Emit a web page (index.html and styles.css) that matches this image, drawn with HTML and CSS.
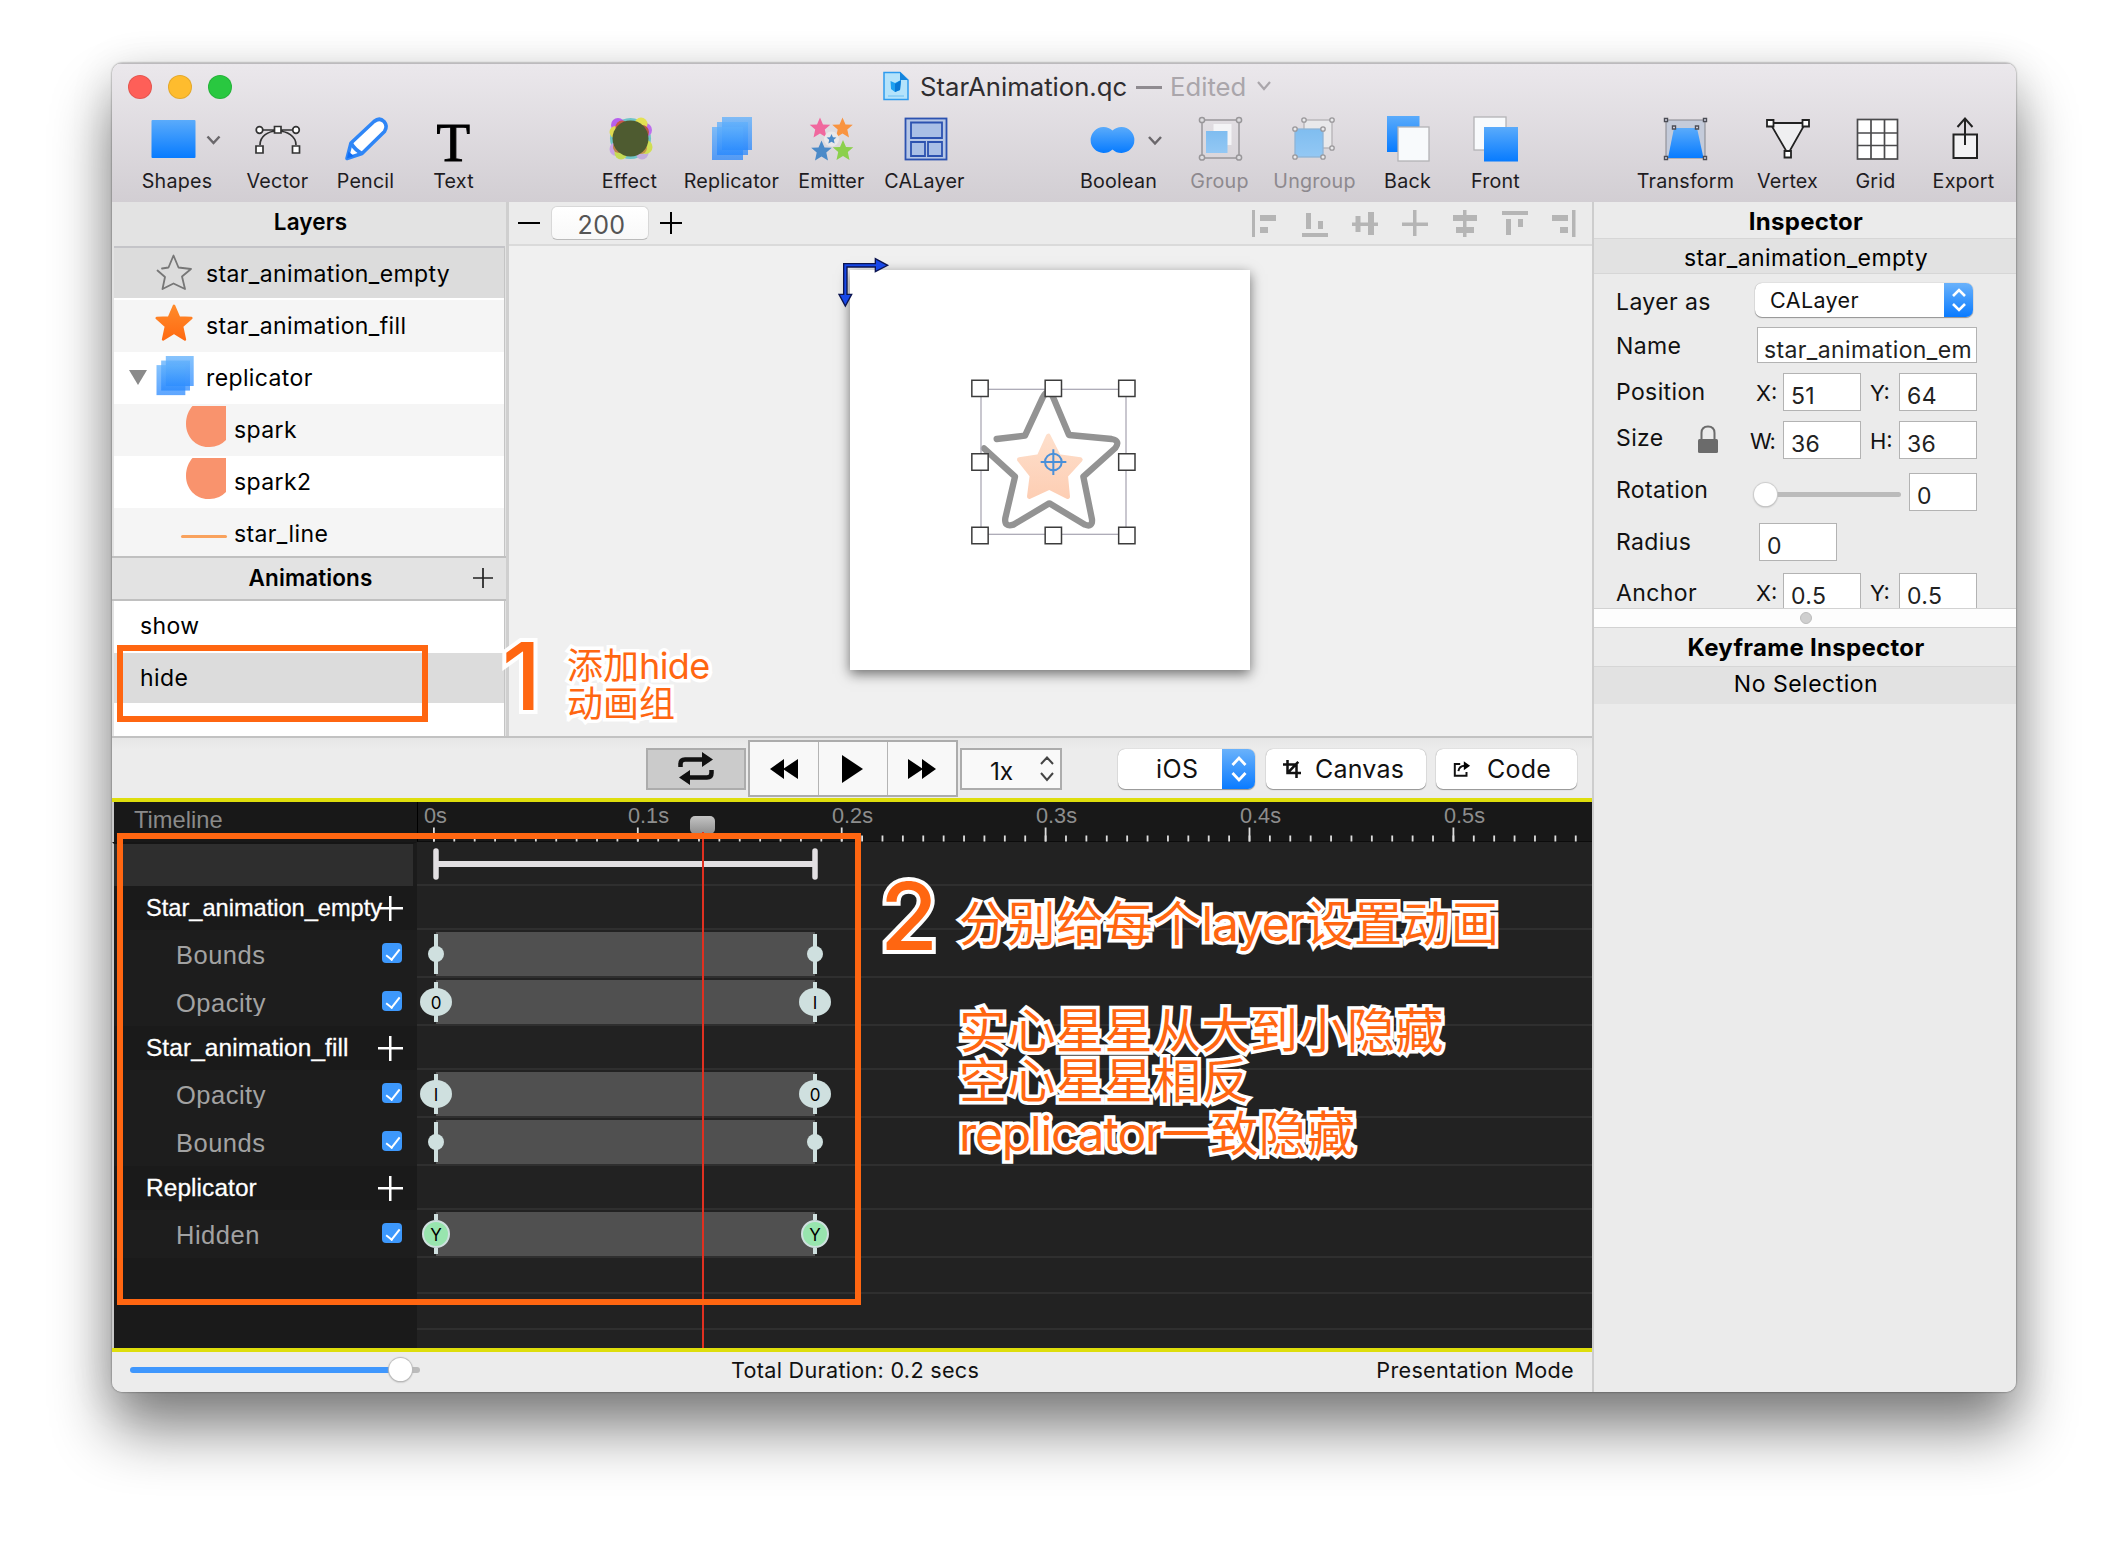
FILE: index.html
```html
<!DOCTYPE html>
<html lang="en">
<head>
<meta charset="utf-8">
<title>StarAnimation.qc</title>
<link rel="stylesheet" href="styles.css">
</head>
<body>
<svg class="defs" width="0" height="0">
  <defs>
    <linearGradient id="blue" x1="0" y1="0" x2="0" y2="1"><stop offset="0" stop-color="#5aabfb"/><stop offset="1" stop-color="#077bff"/></linearGradient>
    <linearGradient id="paleblue" x1="0" y1="0" x2="0" y2="1"><stop offset="0" stop-color="#7fbdf0"/><stop offset="1" stop-color="#93c8f4"/></linearGradient>
    <linearGradient id="orange" x1="0" y1="0" x2="0" y2="1"><stop offset="0" stop-color="#ff8a2a"/><stop offset="1" stop-color="#ff6a12"/></linearGradient>
    <linearGradient id="peach" x1="0" y1="0" x2="0" y2="1"><stop offset="0" stop-color="#fedfcb"/><stop offset="1" stop-color="#fdceb4"/></linearGradient>
    <linearGradient id="layer" x1="0" y1="0" x2="0" y2="1"><stop offset="0" stop-color="#5fb0fc" stop-opacity=".75"/><stop offset="1" stop-color="#1a80ff" stop-opacity=".7"/></linearGradient>
    <path id="star" d="M0-10.5 3-3.6 10.3-3.2 4.8 1.6 6.5 9.5 0 5.5-6.5 9.5-4.8 1.6-10.3-3.2-3-3.6Z" stroke-linejoin="round" stroke-width="1.5"/>
    <g id="stack" fill="url(#layer)">
      <path d="M10 0H40V33H10Z"/>
      <path d="M5 5H36V38H5Z"/>
      <path d="M0 10H31V43H0Z"/>
    </g>
  </defs>
</svg>
<div class="window">
  <header class="titlebar">
    <div class="title-row">
      <div class="lights"><i class="red"></i><i class="amber"></i><i class="green"></i></div>
      <div class="title">
        <svg width="26" height="30" viewBox="883 71 26 30"><path d="M884 72.500H900L908 80V99.500H884Z" fill="#b4e3fb" stroke="#2d9bee" stroke-width="1.500"/><path d="M900 72V80H908Z" fill="#1584dc"/><path d="M890.500 81 895 83 901 80 900 90 895 92 891 89Z" fill="#1ea0f0"/><path d="M895 84 901 80 900 90 895 92Z" fill="#0a78d4"/><path d="M888 96H904" stroke="#6fc0f2"/></svg>
        <span class="name">StarAnimation.qc</span><span class="dash"></span><span class="edited">Edited</span>
        <svg width="16" height="12" viewBox="0 0 16 12"><path d="M2 2 8 9 14 2" fill="none" stroke="#aaa6ab" stroke-width="2.200"/></svg>
      </div>
    </div>
    <div class="tools">
      <div class="tool"><svg viewBox="126.500 114 100 52"><rect x="151" y="120" width="44" height="38" rx="1" fill="url(#blue)"/><path d="M207 136.500 213 143 219 136.500" fill="none" stroke="#6b686c" stroke-width="2.500"/></svg><span>Shapes</span></div>
      <div class="tool"><svg viewBox="227 114 100 52"><g stroke="#333" stroke-width="1.700" fill="none"><path d="M263 130H293M260 145C260 136 268 131 277.500 131S296 136 296 145"/><g fill="#fff"><circle cx="259.500" cy="130" r="3.300"/><circle cx="296" cy="130" r="3.300"/><path d="M274.500 126.500h6.500v6.500h-6.500ZM256 146h7v7h-7ZM292.500 146h7v7h-7Z"/></g></g></svg><span>Vector</span></div>
      <div class="tool"><svg viewBox="315 114 100 52"><g fill="#fff" stroke="#2f86f6" stroke-width="3.600" stroke-linejoin="round"><path d="M347 158.500 351 143 374 121.500Q379.500 117 384 121.500 388 126 384.500 131.500L362 153.500Z"/><path d="M351 143Q355 150 362 153.500" fill="none"/></g><path d="M347 158.500 348.500 151.500 354 156Z" fill="#0f6df5"/></svg><span>Pencil</span></div>
      <div class="tool"><svg viewBox="403 114 100 52"><text class="glyph-t" x="453.500" y="160.500" text-anchor="middle">T</text></svg><span>Text</span></div>
      <div class="tool"><svg viewBox="579 114 100 52"><g opacity=".85"><circle cx="630.500" cy="138.500" r="20.500" fill="#5cc0c4"/><circle cx="618" cy="125" r="7" fill="#b04af0"/><circle cx="645" cy="130" r="7" fill="#b85af0"/><circle cx="641" cy="124" r="6.500" fill="#e4e23a"/><circle cx="615.500" cy="132" r="6" fill="#e0dc38"/><circle cx="616.500" cy="149" r="7" fill="#c79be6"/><circle cx="642" cy="153" r="6.500" fill="#bfa6dc"/><circle cx="621" cy="153" r="6.500" fill="#c2dc3e"/><circle cx="645.500" cy="147" r="7" fill="#cfe03c"/><circle cx="622" cy="127" r="6.500" fill="#c4432a"/><circle cx="642" cy="132" r="7" fill="#b0402c"/><circle cx="619" cy="147" r="6" fill="#b8742c"/><circle cx="641" cy="148" r="6" fill="#c08a30"/></g><circle cx="630.500" cy="138.500" r="18" fill="#4e5b30"/></svg><span>Effect</span></div>
      <div class="tool"><svg viewBox="681 114 100 52"><use href="#stack" x="712" y="117"/></svg><span>Replicator</span></div>
      <div class="tool"><svg viewBox="781 114 100 52"><use href="#star" x="820" y="128" fill="#f0689e"/><use href="#star" x="842.500" y="128" fill="#f99440"/><use href="#star" x="821.500" y="151" fill="#4b8ac8"/><use href="#star" x="843" y="150.500" fill="#8cd04c"/><circle cx="831.500" cy="139" r="7.500" fill="#e9e8ea"/><use href="#star" transform="translate(831.500 139) scale(.48)" fill="#4b8ac8"/></svg><span>Emitter</span></div>
      <div class="tool"><svg viewBox="874 114 100 52"><g fill="#a9bfe6" stroke="#2c52b0" stroke-width="1.800"><rect x="905.500" y="118.500" width="41" height="41" fill="#b6c7e6"/><path d="M911 122.500H942V138H911ZM911 142H925V156H911ZM928 142H942V156H928Z"/></g></svg><span>CALayer</span></div>
      <div class="tool"><svg viewBox="1068 114 100 52"><path d="M1112.500 130.500A13 13 0 1 0 1112.500 149.500 13 13 0 1 0 1112.500 130.500Z" fill="url(#blue)"/><path d="M1149 137 1155 143.500 1161 137" fill="none" stroke="#6b686c" stroke-width="2.500"/></svg><span>Boolean</span></div>
      <div class="tool off"><svg viewBox="1169 114 100 52"><rect x="1213.500" y="124" width="18" height="21" fill="#f4f4f6"/><rect x="1206" y="131" width="21.500" height="22" fill="url(#paleblue)"/><g fill="#dddcdf" stroke="#99979a" stroke-width="1.500"><rect x="1202" y="120" width="37" height="38" fill="none"/><circle cx="1202" cy="120" r="2.600"/><circle cx="1239" cy="120" r="2.600"/><circle cx="1202" cy="157.500" r="2.600"/><circle cx="1239" cy="157.500" r="2.600"/></g></svg><span>Group</span></div>
      <div class="tool off"><svg viewBox="1264 114 100 52"><g fill="#e9e9eb" stroke="#99979a" stroke-width="1.300"><rect x="1304" y="120" width="28" height="28" stroke="#b5b3b6"/><circle cx="1304" cy="120" r="2.200"/><circle cx="1332" cy="120" r="2.200"/><circle cx="1332" cy="148" r="2.200"/><rect x="1295" y="129" width="28" height="28" fill="url(#paleblue)" stroke="#8fb4d6"/><circle cx="1295" cy="129" r="2.200"/><circle cx="1323" cy="129" r="2.200"/><circle cx="1295" cy="157" r="2.200"/><circle cx="1323" cy="157" r="2.200"/></g></svg><span>Ungroup</span></div>
      <div class="tool"><svg viewBox="1357 114 100 52"><rect x="1387" y="116" width="32.500" height="36" fill="url(#blue)"/><rect x="1398" y="127" width="31" height="34" fill="#f8fafc" stroke="#b3b3b6" stroke-width="1.300"/></svg><span>Back</span></div>
      <div class="tool"><svg viewBox="1445 114 100 52"><rect x="1474" y="117" width="32" height="33" fill="#f8fafc" stroke="#b3b3b6" stroke-width="1.300"/><rect x="1484" y="127" width="34" height="34.500" fill="url(#blue)"/></svg><span>Front</span></div>
      <div class="tool"><svg viewBox="1635 114 100 52"><rect x="1666" y="120" width="39" height="38" fill="#c4cbda" stroke="#85868c"/><path d="M1674 128H1697L1703.500 158H1668Z" fill="url(#blue)"/><g fill="#eef" stroke="#4b4d55" stroke-width="1.400"><path d="M1664.500 118.500h3v3h-3ZM1703.500 118.500h3v3h-3ZM1664.500 156.500h3v3h-3ZM1703.500 156.500h3v3h-3ZM1672.500 126h3v3h-3ZM1695.500 126h3v3h-3Z"/></g></svg><span>Transform</span></div>
      <div class="tool"><svg viewBox="1737 114 100 52"><g stroke="#222" stroke-width="1.800" fill="#efeff1"><path d="M1770 123H1805.500L1788 154Z"/><g fill="#fff"><path d="M1767 120h6.500v6.500h-6.500ZM1802.500 120h6.500v6.500h-6.500ZM1784.500 151h6.500v6.500h-6.500Z"/></g></g></svg><span>Vertex</span></div>
      <div class="tool"><svg viewBox="1825 114 100 52"><g fill="#fff" stroke="#4a4a4c" stroke-width="1.700"><rect x="1857.500" y="119.500" width="40" height="39.500"/><path d="M1871 119V159M1884.500 119V159M1857 133H1898M1857 145.500H1898"/></g></svg><span>Grid</span></div>
      <div class="tool"><svg viewBox="1913 114 100 52"><g stroke="#222" stroke-width="2" fill="none"><rect x="1953.500" y="134.500" width="23.500" height="23.500" fill="#f3f2f4"/><path d="M1965 145V119M1957.500 127 1965 118.500 1972.500 127"/></g></svg><span>Export</span></div>
    </div>
  </header>

  <div class="body">
    <div class="main">
      <div class="upper">
        <aside class="side">
          <h2 class="layers-head">Layers</h2>
          <ul class="layers">
            <li class="picked"><svg class="ic" viewBox="154 252 42 42"><path d="M162 268.500 168.500 267.500 173.500 255.500 178.500 267.500 191 269 182 276.500 185 289 173.500 283.500 162.500 289 165 277 157.500 270.500" fill="none" stroke="#777" stroke-width="1.800" stroke-linejoin="round" stroke-linecap="round"/></svg><span>star_animation_empty</span></li>
            <li><svg class="ic" viewBox="154 303 42 42"><use href="#star" transform="translate(174 322.500) scale(1.680)" fill="url(#orange)" stroke="url(#orange)"/></svg><span>star_animation_fill</span></li>
            <li><svg class="tri" viewBox="0 0 18 15"><path d="M0 0H18L9 15Z" fill="#8a8a8a"/></svg><svg class="ic" viewBox="154 357 42 42"><use href="#stack" transform="translate(156.500 357) scale(.93 .91)"/></svg><span>replicator</span></li>
            <li class="child"><svg class="ic" viewBox="180 404 48 52"><path d="M192.500 406H226V440A23 23.500 0 0 1 208 447C196 447 186 437 186 424 186 416 189 410 192.500 406Z" fill="#f9936d"/></svg><span>spark</span></li>
            <li class="child"><svg class="ic" viewBox="180 404 48 52"><path d="M192.500 406H226V440A23 23.500 0 0 1 208 447C196 447 186 437 186 424 186 416 189 410 192.500 406Z" fill="#f9936d"/></svg><span>spark2</span></li>
            <li class="child"><svg class="ic" viewBox="180 508 48 52"><path d="M182.500 536.500H225.500" stroke="#f9a25d" stroke-width="3" stroke-linecap="round"/></svg><span>star_line</span></li>
          </ul>
          <h2 class="anim-head">Animations<svg width="22" height="22" viewBox="0 0 22 22"><path d="M1 11H21M11 1V21" stroke="#222" stroke-width="1.700"/></svg></h2>
          <ul class="anims"><li>show</li><li class="picked">hide</li></ul>
        </aside>
        <section class="stage">
          <div class="stage-bar">
            <svg width="24" height="24" viewBox="0 0 24 24"><path d="M1 12H23" stroke="#000" stroke-width="2"/></svg>
            <span class="zoom">200</span>
            <svg width="24" height="24" viewBox="0 0 24 24"><path d="M1 12H23M12 1V23" stroke="#000" stroke-width="2"/></svg>
            <svg class="aligns" width="346" height="34" viewBox="1240 205 346 34"><path fill="#b5b5b5" d="M1252 209h3v27h-3ZM1260 214h16v6h-16ZM1260 226h8v6h-8ZM1302 232h26v4h-26ZM1306 212h5v16h-5ZM1318 220h5v8h-5ZM1352 221.500h26v3.500h-26ZM1355.500 215h5v16h-5ZM1368 211h6v23h-6ZM1402 221.500h26v3.500h-26ZM1413 209h3.500v26h-3.500ZM1463 209h3.500v27h-3.500ZM1453 214h24v6h-24ZM1456 226h18v6h-18ZM1502 210h26v4h-26ZM1506 218h5v16h-5ZM1518 218h5v8h-5ZM1572 209h3.500v27h-3.500ZM1552 214h16v6h-16ZM1560 226h8v6h-8Z"/></svg>
          </div>
          <div class="canvas">
            <div class="artboard">
              <svg class="drawing" width="500" height="450" viewBox="0 0 1500 1350">
                <path d="M590 627 675 617 728 503Q745 470 760 503L807 615 935 627Q962 632 946 654L850 740 876 868Q878 893 855 884L748 820 640 884Q612 892 616 864L645 740 552 655" fill="none" stroke="#939393" stroke-width="19" stroke-linejoin="round" stroke-linecap="round"/>
                <path d="M745 618 717 680 658 689 696 737 688 800 748 772 803 800 797 737 841 689 776 680Z" fill="url(#peach)" stroke="url(#peach)" stroke-width="14" stroke-linejoin="round"/>
                <rect x="543" y="478" width="435" height="435" fill="none" stroke="#aeacb8" stroke-width="4"/>
                <g fill="#fff" stroke="#3c3c3c" stroke-width="4.500"><path d="M515.500 450.500h49v49h-49ZM735.500 450.500h49v49h-49ZM956 450.500h49v49h-49ZM515.500 671.500h49v49h-49ZM956 671.500h49v49h-49ZM515.500 892h49v49h-49ZM735.500 892h49v49h-49ZM956 892h49v49h-49Z"/></g>
                <g fill="none" stroke="#4a90d9" stroke-width="6"><circle cx="760" cy="696" r="25"/><path d="M722 696H799M760 658V735"/></g>
                <path d="M131 101H226V86L263 106 226 125V111H141V193H155L136 228 117 193H131Z" fill="#1747e8" stroke="#0b1450" stroke-width="4"/>
              </svg>
            </div>
          </div>
        </section>
      </div>

      <div class="controls">
        <button class="loop"><svg width="38" height="34" viewBox="0 0 38 34"><path d="M3.500 15V12Q3.500 7.500 8 7.500H26M34.500 18V21Q34.500 25.500 30 25.500H11" fill="none" stroke="#111" stroke-width="4.500"/><path d="M25 0 36 7.500 25 15ZM13 18 2 25.500 13 33Z" fill="#111"/></svg></button>
        <div class="transport">
          <button><svg width="28" height="20" viewBox="0 0 28 20"><path d="M14 0V20L0 10ZM28 0V20L13 10Z"/></svg></button>
          <button><svg width="24" height="28" viewBox="0 0 24 28"><path d="M1 0 22 14 1 28Z"/></svg></button>
          <button><svg width="28" height="20" viewBox="0 0 28 20"><path d="M0 0V20L15 10ZM14 0V20L28 10Z"/></svg></button>
        </div>
        <div class="speed">1x<svg width="18" height="28" viewBox="0 0 18 28"><path d="M3 9 9 2.500 15 9M3 18 9 25 15 18" fill="none" stroke="#444" stroke-width="2"/></svg></div>
        <div class="select os"><span>iOS</span><i><svg width="18" height="28" viewBox="0 0 18 28"><path d="M2.500 10 9 3 15.500 10M2.500 18 9 25 15.500 18" fill="none" stroke="#fff" stroke-width="2.800"/></svg></i></div>
        <div class="btn wide"><svg width="18" height="20" viewBox="0 0 20 20"><path d="M5 0V14.500H20M0 5H15V20M5 14.500 17 2" fill="none" stroke="#111" stroke-width="2.800"/></svg>Canvas</div>
        <div class="btn code"><svg width="18" height="19" viewBox="0 0 20 20"><path d="M8 5H2V18H15V14M6 13Q7 7 13 7" fill="none" stroke="#111" stroke-width="2.200"/><path d="M12 2 19 7 12 12Z"/></svg>Code</div>
      </div>

      <div class="timeline">
        <div class="row ruler">
          <div class="label">Timeline</div>
          <div class="scale">
            <span>0s</span><span>0.1s</span><span>0.2s</span><span>0.3s</span><span>0.4s</span><span>0.5s</span>
            <svg class="ticks" width="1174" height="40" viewBox="417 802 1174 40"><path d="M433 838.500H1578" stroke="#ddd" stroke-width="6" stroke-dasharray="1.800 18.590"/><path d="M433 834.500H1578" stroke="#ddd" stroke-width="14" stroke-dasharray="1.800 202.100"/></svg>
          </div>
        </div>
        <div class="row range"><div class="label"></div><div class="track"><svg width="390" height="32" viewBox="0 0 390 32"><path d="M3 16H382" stroke="#e2dfe2" stroke-width="6"/><path d="M3 3V29M382 3V29" stroke="#e2dfe2" stroke-width="5.500" stroke-linecap="round"/></svg></div></div>
        <div class="row group"><div class="label tight">Star_animation_empty<b class="plus"></b></div><div class="track"></div></div>
        <div class="row prop"><div class="label"><span>Bounds</span><b class="check"></b></div><div class="track"><div class="bar"><i class="key"></i><i class="key end"></i></div></div></div>
        <div class="row prop"><div class="label"><span>Opacity</span><b class="check"></b></div><div class="track"><div class="bar"><i class="key big">0</i><i class="key big end">I</i></div></div></div>
        <div class="row group"><div class="label">Star_animation_fill<b class="plus"></b></div><div class="track"></div></div>
        <div class="row prop"><div class="label"><span>Opacity</span><b class="check"></b></div><div class="track"><div class="bar"><i class="key big">I</i><i class="key big end">0</i></div></div></div>
        <div class="row prop"><div class="label"><span>Bounds</span><b class="check"></b></div><div class="track"><div class="bar"><i class="key"></i><i class="key end"></i></div></div></div>
        <div class="row group"><div class="label">Replicator<b class="plus"></b></div><div class="track"></div></div>
        <div class="row prop"><div class="label"><span>Hidden</span><b class="check"></b></div><div class="track"><div class="bar"><i class="key yes">Y</i><i class="key yes end">Y</i></div></div></div>
        <div class="row blank"><div class="label"></div><div class="track"></div></div>
        <div class="row blank"><div class="label"></div><div class="track"></div></div>
        <div class="row last"><div class="label"></div><div class="track"></div></div>
        <div class="playline"></div>
        <div class="playhead"></div>
      </div>

      <footer>
        <div class="slider"><i></i></div>
        <span class="total">Total Duration: 0.2 secs</span>
        <span class="mode">Presentation Mode</span>
      </footer>
    </div>

    <aside class="inspector">
      <h2>Inspector</h2>
      <div class="band">star_animation_empty</div>
      <div class="form">
        <div class="field f-layer"><label>Layer as</label><div class="select"><span>CALayer</span><i><svg width="18" height="28" viewBox="0 0 18 28"><path d="M3 10 9 4 15 10M3 18 9 24 15 18" fill="none" stroke="#fff" stroke-width="2.600"/></svg></i></div></div>
        <div class="field f-name"><label>Name</label><div class="input">star_animation_em</div></div>
        <div class="field f-pos"><label>Position</label><em>X:</em><div class="input">51</div><em class="second">Y:</em><div class="input">64</div></div>
        <div class="field f-size"><label><span>Size</span><svg width="20" height="28" viewBox="0 0 20 28"><path d="M3.500 15V8Q3.500 1.500 10 1.500T16.500 8V15" fill="none" stroke="#6b6b6b" stroke-width="2"/><rect y="14" width="20" height="14" rx="1.500" fill="#6b6b6b"/></svg></label><em class="w">W:</em><div class="input">36</div><em class="second">H:</em><div class="input">36</div></div>
        <div class="field f-rot"><label>Rotation</label><div class="dial"><i></i></div><div class="input">0</div></div>
        <div class="field f-rad"><label>Radius</label><div class="input">0</div></div>
        <div class="field f-anchor"><label>Anchor</label><em>X:</em><div class="input">0.5</div><em class="second">Y:</em><div class="input">0.5</div></div>
      </div>
      <div class="splitter"><i></i></div>
      <h2 class="kf">Keyframe Inspector</h2>
      <div class="band none">No Selection</div>
    </aside>
  </div>
</div>

<div class="mark box-one"></div>
<div class="mark box-two"></div>
<div class="note digit one">1</div>
<div class="note small">添加<span>hide</span><br>动画组</div>
<div class="note digit two">2</div>
<div class="note large first">分别给每个<span>layer</span>设置动画</div>
<div class="note large l2">实心星星从大到小隐藏</div>
<div class="note large l3">空心星星相反</div>
<div class="note large l4"><span>replicator</span>一致隐藏</div>
</body>
</html>
```
FILE: styles.css
```css
* { box-sizing: border-box; }
body { margin: 0; width: 2128px; height: 1552px; overflow: hidden; background: #fff; padding: 63px 112px 0; font-family: Inter, "Noto Sans CJK SC", sans-serif; font-size: 23px; letter-spacing: .38px; color: #111; }
.defs { position: absolute; }
h2, ul { margin: 0; padding: 0; list-style: none; }
button { padding: 0; margin: 0; }
svg { display: block; flex: none; }

.window { width: 1904px; height: 1329px; border-radius: 10px; overflow: hidden; background: #ebebeb; box-shadow: 0 0 2px rgba(0,0,0,.6), 0 38px 60px rgba(0,0,0,.48), 0 6px 44px rgba(0,0,0,.12); display: flex; flex-direction: column; }

/* title bar and tools */
.titlebar { height: 139px; background: linear-gradient(#ebe8ec, #d2ced3); border-top: 1px solid #bcbabd; letter-spacing: 0; }
.title-row { height: 46px; display: flex; align-items: center; }
.lights { display: flex; gap: 16px; padding: 0 0 1px 16px; width: 771px; }
.lights i { width: 24px; height: 24px; border-radius: 50%; border: 1px solid rgba(0,0,0,.1); }
.red { background: #fe5f58; }
.amber { background: #febc2e; }
.green { background: #29c840; }
.title { display: flex; align-items: center; font-size: 25.700px; height: 46px; padding-bottom: 2px; }
.title .name { margin-left: 11px; width: 208px; white-space: nowrap; color: #2f2d30; }
.title .dash { width: 26px; height: 3px; background: #8f8b90; margin: 2px 8px 0 8px; }
.title .edited { color: #aaa6ab; width: 86px; }
.tools { display: flex; padding-top: 4px; }
.tool { display: flex; flex-direction: column; align-items: center; font-size: 19.700px; letter-spacing: .2px; white-space: nowrap; color: #1e1c1f; }
.tool svg { width: 100px; height: 52px; }
.tool span { height: 28px; line-height: 28px; margin: 1px 0 0 1px; }
.tool.off { color: #8d898e; }
.glyph-t { font: 55px "Liberation Serif", serif; stroke: #000; stroke-width: 1; fill: #000; }
.tool:nth-child(1) { width: 72px; margin-left: 28.5px; }
.tool:nth-child(2) { width: 64px; margin-left: 32.5px; }
.tool:nth-child(3) { width: 60px; margin-left: 26px; }
.tool:nth-child(4) { width: 42px; margin-left: 37px; }
.tool:nth-child(5) { width: 58px; margin-left: 126px; }
.tool:nth-child(6) { width: 98px; margin-left: 24px; }
.tool:nth-child(7) { width: 70px; margin-left: 16px; }
.tool:nth-child(8) { width: 80px; margin-left: 18px; }
.tool:nth-child(9) { width: 78px; margin-left: 115px; }
.tool:nth-child(10) { width: 60px; margin-left: 32px; }
.tool:nth-child(11) { width: 82px; margin-left: 24px; }
.tool:nth-child(12) { width: 48px; margin-left: 28px; }
.tool:nth-child(13) { width: 52px; margin-left: 38px; }
.tool:nth-child(14) { width: 98px; margin-left: 115px; }
.tool:nth-child(15) { width: 62px; margin-left: 22px; }
.tool:nth-child(16) { width: 42px; margin-left: 36px; }
.tool:nth-child(17) { width: 64px; margin-left: 35px; }

.body { flex: 1; display: flex; min-height: 0; }
.main { width: 1480px; display: flex; flex-direction: column; }
.upper { height: 536px; display: flex; border-bottom: 2px solid #c2c2c2; }

/* layers and animations */
.side { width: 394px; display: flex; flex-direction: column; background: #e3e3e3; }
.side h2 { font-size: 22.500px; letter-spacing: .1px; }
.side h2, .inspector h2 { font-weight: 600; text-align: center; color: #000; }
.side ul { background: #fff; margin: 0 1px 0 2px; border-right: 1px solid #c4c4c4; color: #000; }
.layers-head { height: 44px; line-height: 40px; padding-left: 3px; }
.layers { height: 310px; border-top: 2px solid #c4c4c8; overflow: hidden; }
.layers li { height: 52px; display: flex; align-items: center; padding: 0 0 2px 42px; }
.layers li .ic { width: 42px; height: 42px; margin-right: 10px; margin-left: -2px; }
.layers li span { padding-top: 2px; }
.layers li:nth-child(even) { background: #f5f5f5; }
.layers li.picked { height: 52px; background: #dcdcdc; border-bottom: 2px solid #fff; padding-bottom: 0; }
.layers li .tri { width: 18px; height: 15px; margin: 0 9px 0 -27px; }
.layers li.child { padding-left: 68px; padding-bottom: 0; }
.layers li.child .ic { width: 48px; height: 52px; margin-right: 6px; }
.layers li.child span { padding: 0; margin-top: -1px; }
.anim-head { height: 45px; line-height: 39px; border-top: 2px solid #c0c0c0; border-bottom: 2px solid #c0c0c0; padding-left: 3px; position: relative; }
.anim-head svg { position: absolute; right: 12px; top: 9px; }
.anims { flex: 1; }
.anims li { height: 52px; line-height: 50px; padding-left: 26px; }
.anims li.picked { height: 50px; background: #dcdcdc; }

/* stage */
.stage { flex: 1; border-left: 3px solid #cfcfcf; display: flex; flex-direction: column; background: #f0f0f0; }
.stage-bar { height: 44px; background: #ebebeb; border-bottom: 2px solid #dadada; display: flex; align-items: center; padding-left: 8px; }
.zoom { width: 98px; height: 34px; margin: 0 10px; border-radius: 6px; background: linear-gradient(#fff, #f8f8f8); border: 1px solid #d8d8d8; border-bottom-color: #bbb; text-align: center; line-height: 36px; padding-left: 3px; font-size: 25px; color: #555; }
.aligns { margin-left: auto; margin-right: 6px; }
.canvas { flex: 1; padding: 24px 0 0 341px; }
.artboard { width: 400px; height: 400px; background: #fff; box-shadow: 0 4px 12px rgba(0,0,0,.55); position: relative; }
.drawing { position: absolute; left: -50px; top: -40px; }

/* playback controls */
.controls { height: 60px; display: flex; align-items: center; padding: 1px 0 0 534px; font-size: 25px; background: linear-gradient(#e6e6e6, #ececec 12px); }
.loop { width: 100px; height: 42px; background: #cbcbcb; border: 2px solid #acacac; display: grid; place-items: center; }
.transport { display: flex; width: 210px; height: 57px; margin-left: 2px; border: 2px solid #acacac; background: #f8f8f8; }
.transport button { flex: 1; border: 0; background: none; display: grid; place-items: center; }
.transport button + button { border-left: 1.500px solid #b4b4b4; }
.speed { width: 102px; height: 42px; margin-left: 2px; border: 2px solid #acacac; background: #f9f9f9; display: flex; align-items: center; justify-content: space-between; padding: 4px 4px 0 28px; font-size: 24.500px; letter-spacing: -.3px; }
.speed svg { margin-top: -3px; }
.select { display: flex; height: 40px; background: #fff; border-radius: 7px; overflow: hidden; box-shadow: 0 1px 1px rgba(0,0,0,.35), 0 0 1px rgba(0,0,0,.4); align-items: center; justify-content: space-between; }
.select i { width: 33px; height: 100%; background: linear-gradient(#6ab2fb, #0a7bff); display: grid; place-items: center; }
.os { width: 137px; margin-left: 56px; padding-left: 38px; }
.btn { height: 40px; margin-left: 11px; background: #fff; border-radius: 7px; box-shadow: 0 1px 1px rgba(0,0,0,.35), 0 0 1px rgba(0,0,0,.4); display: flex; align-items: center; padding-left: 17px; letter-spacing: .2px; }
.wide { width: 160px; }
.wide svg { margin-right: 14px; }
.code { width: 141px; margin-left: 10px; }
.code svg { margin-right: 16px; }

/* timeline */
.timeline { height: 554px; border: solid #dede0c; border-width: 4px 0; background: #222; position: relative; font-family: "Liberation Sans", sans-serif; letter-spacing: 0; }
.row { display: flex; height: 48px; }
.row .label { width: 305px; flex: none; border-left: 2px solid #c9c9c9; background: #1a1a1a; display: flex; align-items: center; justify-content: space-between; white-space: nowrap; }
.row .track { flex: 1; border-bottom: 2px solid #2f2f2f; position: relative; }
.ruler { height: 40px; }
.ruler .label { padding-left: 20px; background: #181818; color: #8a8a8a; font-size: 23.700px; padding-bottom: 4px; }
.scale { flex: 1; min-width: 0; background: #181818; border-left: 1px solid #000; border-bottom: 1px solid #0c0c0c; position: relative; display: flex; padding-left: 6px; color: #8d8d8d; font-size: 21.700px; line-height: 27px; }
.scale span { width: 204px; flex: none; }
.ticks { position: absolute; left: -1px; top: 0; }
.range { height: 44px; }
.range .label { background: #2e2e2e; border-right: 4px solid #1b1b1b; border-top: 2px solid #151515; }
.range svg { position: absolute; left: 16px; top: 6px; }
.group { height: 44px; }
.group .label { color: #fff; font-size: 24.400px; letter-spacing: .1px; padding: 0 14px 0 32px; -webkit-text-stroke: .3px #fff; }
.group .label.tight { font-size: 23.600px; letter-spacing: 0; }
.prop .label { background: #1d1d1d; color: #a2a2a2; font-size: 25.500px; letter-spacing: .5px; padding: 0 15px 0 62px; }
.prop .label span { height: 28px; line-height: 30px; overflow: hidden; margin-top: -1px; }
.plus { width: 25px; height: 25px; background: linear-gradient(#fff, #fff) center / 25px 2.500px no-repeat, linear-gradient(#fff, #fff) center / 2.500px 25px no-repeat; margin-left: -4px; }
.check { width: 20px; height: 20px; border-radius: 4px; background: #3d98fc; position: relative; margin-top: -2px; }
.check::after { content: ""; position: absolute; left: 7px; top: 2.500px; width: 6px; height: 12px; border: solid #fff; border-width: 0 2.500px 2.500px 0; transform: rotate(38deg); }
.bar { position: absolute; left: 19px; top: 2px; width: 379px; height: 44px; background: #505050; }
.key { position: absolute; left: 0; top: 22px; width: 16px; height: 16px; margin: -8px 0 0 -8px; border-radius: 50%; background: #cfe0df; font: 17px/32px Inter, sans-serif; text-align: center; color: #000; z-index: 1; isolation: isolate; }
.key::before { content: ""; position: absolute; z-index: -1; left: 50%; top: 50%; width: 4px; height: 40px; margin: -20px 0 0 -2px; background: #cfe0df; }
.key.end { left: 100%; }
.key.big { width: 32px; height: 28px; margin: -14px 0 0 -16px; line-height: 30px; }
.key.yes { width: 28px; height: 28px; margin: -14px 0 0 -14px; line-height: 26px; background: #98e5ae; border: 2px solid #cfe0df; }
.key.yes::before { background: linear-gradient(#cfe0df 6px, transparent 6px 34px, #cfe0df 34px); }
.blank { height: 36px; }
.last { height: 18px; }
.last .track { border: 0; }
.playline { position: absolute; left: 590px; top: 30px; bottom: 0; width: 2px; background: #e03020; z-index: 2; }
.playhead { position: absolute; left: 578px; top: 14px; width: 25px; height: 18px; border-radius: 5px; background: linear-gradient(#c4c4c4, #8e8e8e); }

footer { flex: 1; display: flex; align-items: center; padding: 0 18px 4px 18px; font-size: 21.600px; letter-spacing: .3px; color: #111; background: #ececec; white-space: nowrap; }
.slider { width: 290px; height: 6px; border-radius: 3px; background: linear-gradient(90deg, #3f97fd 270px, #bbb 270px); position: relative; margin-top: -1px; }
.slider i { position: absolute; left: 259px; top: -9px; width: 23px; height: 23px; border-radius: 50%; background: #fff; box-shadow: 0 0 1px 1px #bbb, 0 1px 2px #999; }
.total { margin-left: 311px; }
.mode { margin-left: auto; }

/* inspector */
.inspector { flex: 1; border-left: 2px solid #cdcdcd; background: #ebebeb; }
.inspector h2 { height: 36px; line-height: 40px; font-size: 24px; letter-spacing: .3px; font-weight: 700; padding-left: 2px; }
.band { height: 36px; line-height: 39px; text-align: center; background: #e2e2e2; border: solid #d6d6d6; border-width: 1px 0; color: #000; padding-left: 2px; }
.form { height: 334px; overflow: hidden; padding-left: 22px; }
.field { height: 48px; display: flex; align-items: center; white-space: nowrap; }
.field label { width: 141px; display: flex; align-items: center; justify-content: space-between; color: #111; }
.field label svg { margin-right: 39px; margin-top: -3px; }
.field em { font-style: normal; width: 27px; margin-left: -1px; font-size: 22px; letter-spacing: 0; padding-top: 1px; }
.field em.second { width: 29px; margin-left: 9px; }
.field em.w { margin-left: -7px; width: 33px; letter-spacing: -1px; }
.input { width: 78px; height: 38px; border: 1.500px solid #b3b3b3; background: #fff; padding-left: 7px; line-height: 44px; overflow: hidden; color: #222; }
.field .select { width: 218px; height: 34px; font-size: 21.500px; padding-left: 15px; margin: 4px 0 0 -2px; }
.field .select i { width: 29px; }
.f-layer label { padding-top: 8px; }
.f-name { height: 46px; }
.f-name label { padding-top: 2px; }
.f-name .input { width: 220px; height: 36px; line-height: 44px; padding-left: 6px; }
.f-size label span { margin-top: -5px; }
.f-rot { height: 54px; padding-top: 2px; }
.f-rot label { padding-bottom: 4px; }
.f-rot .input { width: 68px; margin-left: 8px; }
.dial { width: 144px; height: 5px; border-radius: 3px; background: #bbb; position: relative; margin-top: 5px; }
.dial i { position: absolute; left: -3px; top: -9px; width: 23px; height: 23px; border-radius: 50%; background: #fff; box-shadow: 0 0 1px 1px #ccc, 0 1px 2px #999; }
.f-rad .input { margin-left: 2px; }
.f-anchor { height: 52px; }
.f-anchor label { padding-top: 2px; }
.splitter { height: 20px; background: #fdfdfd; border: solid #d2d2d2; border-width: 1px 0; display: grid; place-items: center; padding-left: 2px; }
.splitter i { width: 12px; height: 12px; border-radius: 50%; background: #cfcfcf; border: 1px solid #bcbcbc; }
.inspector h2.kf { height: 38px; line-height: 40px; }
.band.none { height: 38px; line-height: 34px; border-bottom: 0; letter-spacing: .5px; }

/* tutorial annotations laid over the window */
.mark { position: absolute; border: 6px solid #ff6611; z-index: 3; }
.box-one { left: 117px; top: 645px; width: 311px; height: 77px; }
.box-two { left: 117px; top: 833px; width: 744px; height: 472px; }
.note { position: absolute; z-index: 4; color: #ff6611; -webkit-text-stroke: 7px #fff; paint-order: stroke fill; white-space: nowrap; letter-spacing: 0; }
.digit { font-size: 94px; font-weight: 450; line-height: 94px; -webkit-text-stroke-width: 8px; }
.one { left: 502px; top: 629px; }
.two { left: 880px; top: 869px; }
.small { left: 567px; top: 647px; font-size: 36px; line-height: 38px; }
.small span { letter-spacing: -.6px; }
.large { left: 959px; font-size: 48px; line-height: 60px; letter-spacing: .5px; }
.large span { letter-spacing: -1.200px; }
.first { top: 894px; }
.l2 { top: 1001px; }
.l3 { top: 1051px; }
.l4 { top: 1104px; }
```
